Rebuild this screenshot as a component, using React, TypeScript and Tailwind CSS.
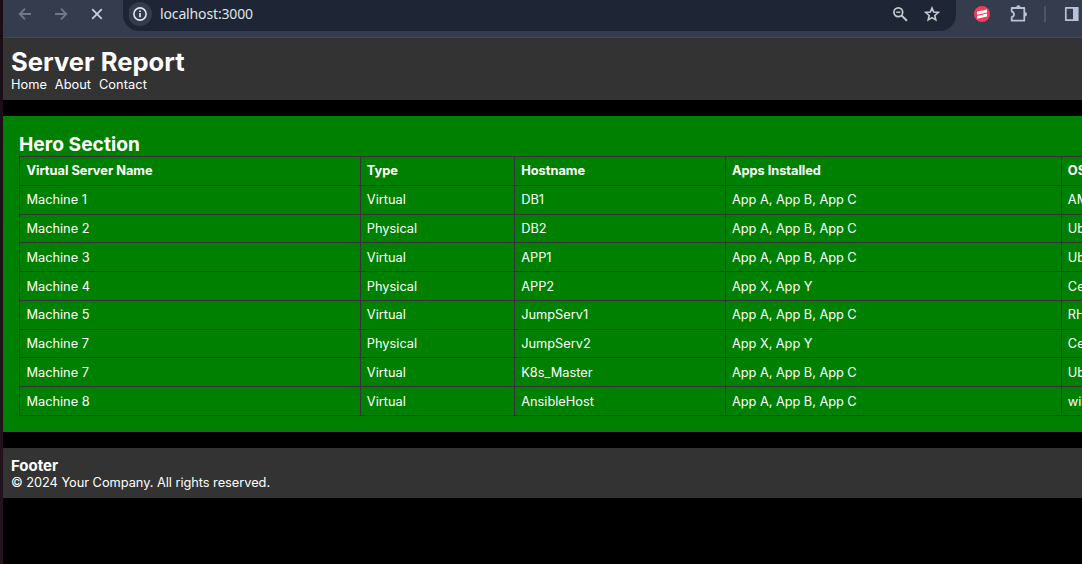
import React from "react";

type Server = { name: string; type: string; host: string; apps: string; os: string; row: string };

const servers: Server[] = [
  { name: "Machine 1", type: "Virtual", host: "DB1", apps: "App A, App B, App C", os: "AMI Linux", row: "h-[29px] pt-[6px] border-[#2f372f]" },
  { name: "Machine 2", type: "Physical", host: "DB2", apps: "App A, App B, App C", os: "Ubuntu", row: "h-[28px] pt-[6px] border-[#3a313a]" },
  { name: "Machine 3", type: "Virtual", host: "APP1", apps: "App A, App B, App C", os: "Ubuntu", row: "h-[29px] pt-[7px] border-[#3a313a]" },
  { name: "Machine 4", type: "Physical", host: "APP2", apps: "App X, App Y", os: "CentOS", row: "h-[29px] pt-[7px] border-[#333333]" },
  { name: "Machine 5", type: "Virtual", host: "JumpServ1", apps: "App A, App B, App C", os: "RHEL", row: "h-[29px] pt-[6px] border-[#3a313a]" },
  { name: "Machine 7", type: "Physical", host: "JumpServ2", apps: "App X, App Y", os: "CentOS", row: "h-[28px] pt-[6px] border-[#333333]" },
  { name: "Machine 7", type: "Virtual", host: "K8s_Master", apps: "App A, App B, App C", os: "Ubuntu", row: "h-[29px] pt-[7px] border-[#333333]" },
  { name: "Machine 8", type: "Virtual", host: "AnsibleHost", apps: "App A, App B, App C", os: "windows", row: "h-[29px] pt-[7px] border-[#3a313a]" },
];

const widths = [
  "w-[341px] pl-[7.4px]",
  "w-[154px] pl-[6.8px]",
  "w-[211px] pl-[7.2px]",
  "w-[336px] pl-[7px] tracking-[-0.04px]",
  "w-[160px] pl-[6.8px]",
];

function Row({ cells, row, header = false }: { cells: string[]; row: string; header?: boolean }) {
  return (
    <div role="row" className={`flex border-t ${row} ${header ? "font-bold" : ""}`}>
      {cells.map((cell, i) => (
        <div key={i} role="cell" className={`shrink-0 leading-[16px] ${widths[i]}`}>
          {cell}
        </div>
      ))}
    </div>
  );
}

function Columns() {
  return (
    <div className="pointer-events-none absolute inset-0 flex">
      <span className="w-[341px] shrink-0 border-l border-[#2f372f]" />
      <span className="w-[154px] shrink-0 border-l border-[#3a313a]" />
      <span className="w-[211px] shrink-0 border-l border-[#3a313a]" />
      <span className="w-[336px] shrink-0 border-l border-[#2f372f]" />
      <span className="w-[160px] shrink-0 border-l border-[#2f372f]" />
    </div>
  );
}

function Toolbar() {
  return (
    <div className="flex h-[38px] shrink-0 items-start border-b border-[#47474a] bg-[#343c4d]">
      <svg className="ml-[14px] mt-[6px] shrink-0" width="16" height="16" viewBox="0 0 16 16" fill="none" stroke="#707989" strokeWidth="1.8">
        <path d="M14 8H3M8 2.7 2.7 8 8 13.3" />
      </svg>
      <svg className="ml-[20px] mt-[6px] shrink-0" width="16" height="16" viewBox="0 0 16 16" fill="none" stroke="#707989" strokeWidth="1.8">
        <path d="M2 8h11M8 2.7 13.3 8 8 13.3" />
      </svg>
      <svg className="ml-[20px] mt-[6px] shrink-0" width="16" height="16" viewBox="0 0 16 16" fill="none" stroke="#c5cfe2" strokeWidth="1.8">
        <path d="m3.2 3.2 9.6 9.6M12.8 3.2l-9.6 9.6" />
      </svg>
      <div className="ml-[18px] flex h-[31px] w-[833px] shrink-0 items-start rounded-b-[16px] bg-[#1e2636]">
        <svg className="ml-[6px] shrink-0" width="28" height="28" viewBox="0 0 28 28" fill="none">
          <circle cx="11" cy="14" r="12" fill="#343c4d" />
          <circle cx="11" cy="14" r="6.1" stroke="#e1e5ed" strokeWidth="1.6" />
          <path d="M11 13v4.2M11 10.5v1.6" stroke="#e1e5ed" strokeWidth="1.7" />
        </svg>
        <span className="ml-[3px] mt-[4px] font-['Noto_Sans','Open_Sans',sans-serif] text-[14px] leading-[20px] tracking-[-0.14px] text-[#dfe3ea]">
          localhost:3000
        </span>
        <svg className="ml-auto mt-[6px]" width="17" height="17" viewBox="0 0 17 17" fill="none" stroke="#c7c9ce">
          <circle cx="6.3" cy="6.2" r="4.4" strokeWidth="1.7" />
          <path d="m9.5 9.4 5.4 5.4" strokeWidth="2" />
          <path d="M4.2 6.2h4.2" strokeWidth="1.4" />
        </svg>
        <svg className="ml-[15px] mr-[16px] mt-[6px]" width="16" height="16" viewBox="0 0 16 16" fill="none" stroke="#c7c9ce" strokeWidth="1.6">
          <path d="m8 2 1.7 4.1 4.5.4-3.4 3 1 4.4L8 11.6l-3.8 2.3 1-4.4-3.4-3 4.5-.4Z" />
        </svg>
      </div>
      <svg className="ml-[18px] mt-[6px] shrink-0" width="16" height="16" viewBox="0 0 16 16">
        <circle cx="8" cy="8" r="8" fill="#f43c5c" />
        <path d="m3 5.6 10-2.2v3L3 8.7ZM3 10l10-2.4v3L3 12.8Z" fill="#fff" />
        <path d="m7.6 3.8 1.2 1M7.4 8.4l1 1.2" stroke="#f43c5c" strokeWidth="0.7" />
      </svg>
      <svg className="ml-[20px] mt-[4px] shrink-0" width="18" height="19" viewBox="0 0 18 19" fill="none" stroke="#b7c3da" strokeWidth="1.8" strokeLinejoin="round">
        <path d="M1.7 4h12.6v12.7H1.7v-3.6c3-.4 3-5.1 0-5.5Z" />
        <path d="M6.2 3.5a2.2 2.2 0 0 1 4.4 0ZM14.8 8a2.2 2.2 0 0 1 0 4.4Z" fill="#b7c3da" stroke="none" />
      </svg>
      <span className="ml-[16px] mt-[6px] h-[16px] w-[2px] shrink-0 bg-[#4a566c]" />
      <svg className="ml-[18px] mt-[6px] shrink-0" width="15" height="16" viewBox="0 0 15 16">
        <path d="M1.8 1.8h11.7v12.4H1.8Z" fill="none" stroke="#b7c3da" strokeWidth="1.7" strokeLinejoin="round" />
        <path d="M9 1h5.4v14H9Z" fill="#b7c3da" />
      </svg>
    </div>
  );
}

export default function App() {
  return (
    <div className="flex h-[564px] w-[1082px] overflow-hidden bg-black font-['Inter',sans-serif] text-[12.8px] text-white">
      <div className="w-[3px] shrink-0 bg-linear-to-b from-[#190c14] to-[#23151d]" />
      <div className="flex min-w-0 flex-1 flex-col overflow-hidden">
        <Toolbar />
        <header className="h-[62px] shrink-0 bg-[#333] px-2 pt-2">
          <h1 className="text-[25.6px] font-bold leading-[31px] tracking-[0.03px]">Server Report</h1>
          <nav className="flex gap-2 leading-[16px]">
            <a>Home</a>
            <a>About</a>
            <a className="tracking-[0.06px]">Contact</a>
          </nav>
        </header>
        <main className="mt-4 h-[316px] shrink-0 bg-[#008000] pl-4 pt-4">
          <h2 className="text-[19.2px] font-bold leading-[24px] tracking-[0.03px]">Hero Section</h2>
          <div role="table" className="relative h-[260px] w-[1202px] border-b border-[#2f372f]">
            <Row header cells={["Virtual Server Name", "Type", "Hostname", "Apps Installed", "OS"]} row="h-[29px] pt-[6px] border-[#3a313a]" />
            {servers.map((s, i) => (
              <Row key={i} cells={[s.name, s.type, s.host, s.apps, s.os]} row={s.row} />
            ))}
            <Columns />
          </div>
        </main>
        <footer className="mt-4 h-[50px] shrink-0 bg-[#333] px-2 pt-[9px]">
          <h3 className="text-[15px] font-bold leading-[18px]">Footer</h3>
          <p className="leading-[16px] tracking-[-0.035px]">© 2024 Your Company. All rights reserved.</p>
        </footer>
      </div>
    </div>
  );
}
